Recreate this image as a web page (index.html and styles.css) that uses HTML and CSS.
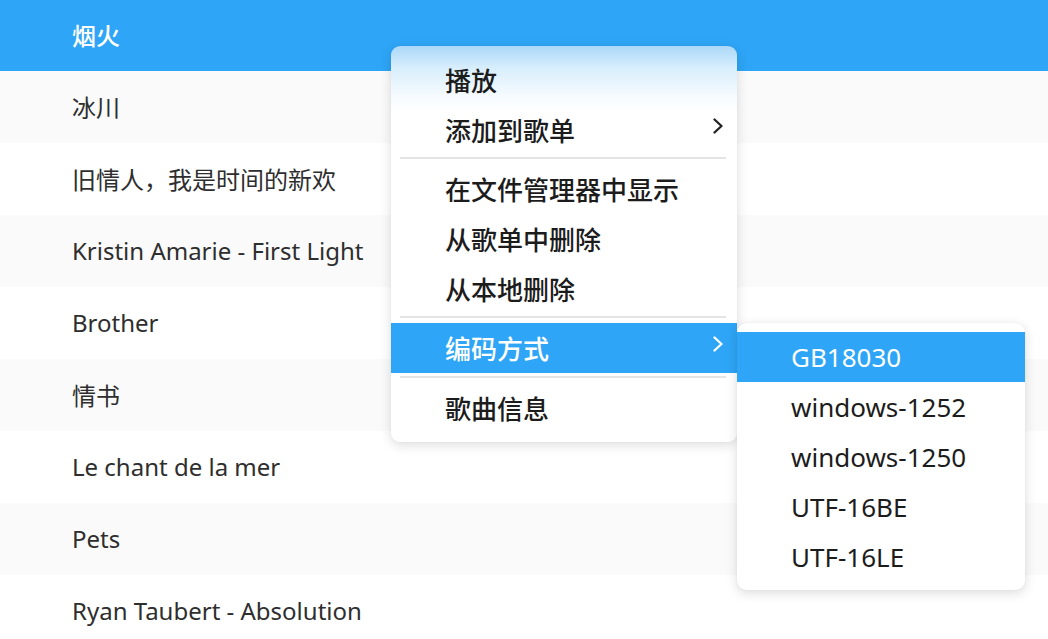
FILE: index.html
```html
<!DOCTYPE html>
<html lang="zh">
<head>
<meta charset="utf-8">
<title>Playlist</title>
<link rel="stylesheet" href="styles.css">
</head>
<body>
<div class="list">
  <div class="row selected">烟火</div>
  <div class="row">冰川</div>
  <div class="row">旧情人，我是时间的新欢</div>
  <div class="row">Kristin Amarie - First Light</div>
  <div class="row">Brother</div>
  <div class="row">情书</div>
  <div class="row">Le chant de la mer</div>
  <div class="row">Pets</div>
  <div class="row">Ryan Taubert - Absolution</div>
</div>

<div class="menu main-menu">
  <div class="item">播放</div>
  <div class="item">添加到歌单<svg class="chev" viewBox="0 0 10 16" width="10" height="16"><polyline points="1.5,1.5 8.5,8 1.5,14.5"/></svg></div>
  <div class="sep"></div>
  <div class="item">在文件管理器中显示</div>
  <div class="item">从歌单中删除</div>
  <div class="item">从本地删除</div>
  <div class="sep"></div>
  <div class="item active">编码方式<svg class="chev" viewBox="0 0 10 16" width="10" height="16"><polyline points="1.5,1.5 8.5,8 1.5,14.5"/></svg></div>
  <div class="sep sep-after"></div>
  <div class="item">歌曲信息</div>
</div>

<div class="menu sub-menu">
  <div class="item active">GB18030</div>
  <div class="item">windows-1252</div>
  <div class="item">windows-1250</div>
  <div class="item">UTF-16BE</div>
  <div class="item">UTF-16LE</div>
</div>
</body>
</html>
```

FILE: styles.css
```css
html, body {
  margin: 0;
  padding: 0;
  width: 1048px;
  height: 639px;
  overflow: hidden;
  background: #ffffff;
  font-family: "Noto Sans", "Noto Sans CJK SC", sans-serif;
}

.list {
  display: flex;
  flex-direction: column;
  margin-top: -2px;
}

.row {
  height: 72px;
  flex: none;
  display: flex;
  align-items: center;
  padding: 0 0 1px 72px;
  box-sizing: border-box;
  font-size: 24px;
  color: #2e2e2e;
  background: #ffffff;
}

.row:first-child {
  height: 73px;
}

.row:nth-child(even) {
  background: #fafafa;
}

.row.selected {
  background: #2ea5f6;
  color: #ffffff;
  font-weight: 500;
}

.menu {
  position: absolute;
  box-sizing: border-box;
  border-radius: 9px;
  background: #ffffff;
  box-shadow: 0 3px 12px rgba(0, 0, 0, 0.14), 0 0 1px rgba(0, 0, 0, 0.12);
  display: flex;
  flex-direction: column;
  overflow: hidden;
}

.main-menu {
  left: 391px;
  top: 46px;
  width: 346px;
  height: 396px;
  padding: 9px 0;
  background: linear-gradient(to bottom, #aad8f9 0px, #d8eefc 22px, #f6fbff 50px, #ffffff 66px);
}

.sub-menu {
  left: 737px;
  top: 323px;
  width: 288px;
  height: 267px;
  padding: 9px 0 8px;
}

.item {
  height: 50px;
  flex: none;
  display: flex;
  align-items: center;
  justify-content: space-between;
  padding: 0 14px 0 54px;
  font-size: 26px;
  font-weight: 500;
  color: #1c1c1c;
}

.sub-menu .item {
  padding-left: 54px;
  font-weight: 400;
}

.item.active {
  background: #2ea5f6;
  color: #ffffff;
}

.chev {
  flex: none;
  margin-top: -8px;
  fill: none;
  stroke: #222222;
  stroke-width: 2.3;
  stroke-linecap: round;
  stroke-linejoin: round;
}

.item.active .chev {
  stroke: #ffffff;
}

.sep {
  flex: none;
  height: 2px;
  margin: 2px 11px 5px 9px;
  background: #e4e4e4;
}

.sep-after {
  margin-top: 3px;
}
```
